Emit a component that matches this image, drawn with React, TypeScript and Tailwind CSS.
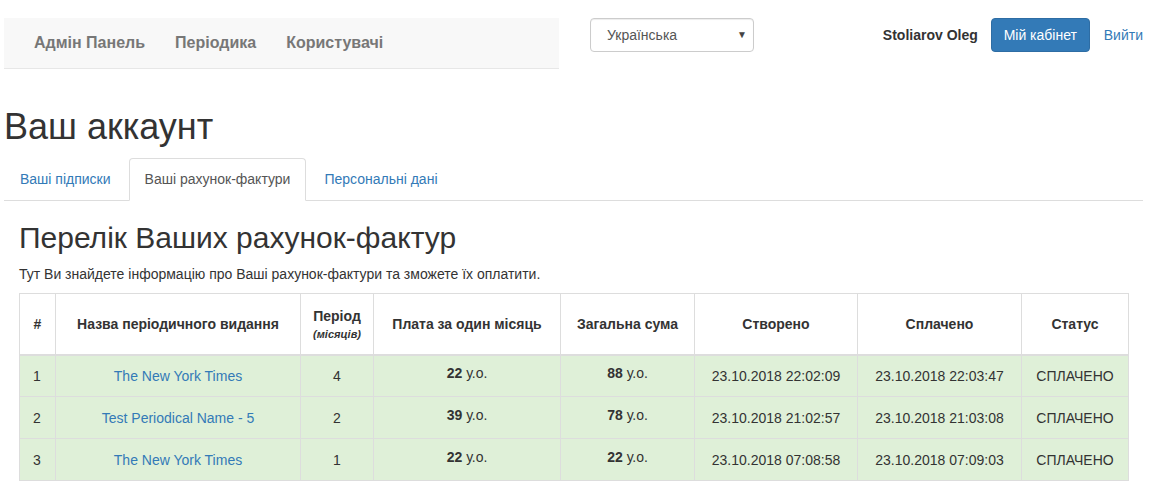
const rows = [
  { n: 1, name: "The New York Times", period: 4, month: 22, total: 88, created: "23.10.2018 22:02:09", paid: "23.10.2018 22:03:47" },
  { n: 2, name: "Test Periodical Name - 5", period: 2, month: 39, total: 78, created: "23.10.2018 21:02:57", paid: "23.10.2018 21:03:08" },
  { n: 3, name: "The New York Times", period: 1, month: 22, total: 22, created: "23.10.2018 07:08:58", paid: "23.10.2018 07:09:03" },
]

const th = "border border-[#ddd] border-b-2 px-2 text-center align-middle font-bold"
const td = "border border-[#ddd] px-2 text-center align-middle"

export default function App() {
  return (
    <div className="min-h-screen bg-white text-[14px] leading-[20px] text-[#333]" style={{ fontFamily: '"Liberation Sans", Arial, sans-serif' }}>
      {/* top bar */}
      <div className="flex items-start pt-[18px] pl-[4px] pr-[8px]">
        <nav className="flex h-[51px] w-[555px] items-center border-b border-[#e7e7e7] bg-[#f8f8f8] pl-[15px]">
          <a className="px-[15px] text-[16px] font-bold text-[#777]">Адмін Панель</a>
          <a className="px-[15px] text-[16px] font-bold text-[#777]">Періодика</a>
          <a className="px-[15px] text-[16px] font-bold text-[#777]">Користувачі</a>
        </nav>
        <div className="ml-[31px] flex h-[34px] w-[164px] items-center justify-between rounded-[4px] border border-[#ccc] bg-white pl-[16px] pr-[6px] text-[#555] shadow-[inset_0_1px_1px_rgba(0,0,0,0.075)]">
          <span>Українська</span>
          <span className="text-[10px] text-[#444]">▼</span>
        </div>
        <div className="flex-1" />
        <div className="flex h-[34px] items-center">
          <span className="font-bold">Stoliarov Oleg</span>
          <button className="ml-[13px] h-[34px] w-[99px] rounded-[4px] border border-[#2e6da4] bg-[#337ab7] text-white">Мій кабінет</button>
          <a className="ml-[14px] text-[#337ab7]">Вийти</a>
        </div>
      </div>

      <div className="pl-[4px] pr-[8px]">
        <h1 className="mt-[38px] mb-[11px] text-[36px] leading-[40px] font-normal">Ваш аккаунт</h1>

        <ul className="flex border-b border-[#ddd]">
          <li className="mr-[2px] px-[15px] py-[10px] text-[#337ab7] border border-transparent">Ваші підписки</li>
          <li className="mr-[2px] -mb-px rounded-t-[4px] border border-[#ddd] border-b-white bg-white px-[15px] py-[10px] text-[#555]">Ваші рахунок-фактури</li>
          <li className="mr-[2px] px-[15px] py-[10px] text-[#337ab7] border border-transparent">Персональні дані</li>
        </ul>

        <div className="px-[15px]">
          <h2 className="mt-[20px] mb-[10px] text-[30px] leading-[33px] font-normal">Перелік Ваших рахунок-фактур</h2>
          <p className="mb-[9px]">Тут Ви знайдете інформацію про Ваші рахунок-фактури та зможете їх оплатити.</p>

          <table className="w-full table-fixed border-collapse border border-[#ddd]">
            <colgroup>
              <col className="w-[36px]" />
              <col className="w-[245px]" />
              <col className="w-[73px]" />
              <col className="w-[187px]" />
              <col className="w-[134px]" />
              <col className="w-[163px]" />
              <col className="w-[164px]" />
              <col className="w-[107px]" />
            </colgroup>
            <thead>
              <tr className="h-[61px]">
                <th className={th}>#</th>
                <th className={th}>Назва періодичного видання</th>
                <th className={th}>
                  <div>Період</div>
                  <div className="text-[11px] leading-[16px] italic">(місяців)</div>
                </th>
                <th className={th}>Плата за один місяць</th>
                <th className={th}>Загальна сума</th>
                <th className={th}>Створено</th>
                <th className={th}>Сплачено</th>
                <th className={th}>Статус</th>
              </tr>
            </thead>
            <tbody>
              {rows.map((r) => (
                <tr key={r.n} className="h-[42px] bg-[#dff0d8]">
                  <td className={td + " !text-left pl-[13px]"}>{r.n}</td>
                  <td className={td}><a className="text-[#337ab7]">{r.name}</a></td>
                  <td className={td}>{r.period}</td>
                  <td className={td + " pb-[6px]"}><b>{r.month}</b> у.о.</td>
                  <td className={td + " pb-[6px]"}><b>{r.total}</b> у.о.</td>
                  <td className={td}>{r.created}</td>
                  <td className={td}>{r.paid}</td>
                  <td className={td}>СПЛАЧЕНО</td>
                </tr>
              ))}
            </tbody>
          </table>
        </div>
      </div>
    </div>
  )
}
